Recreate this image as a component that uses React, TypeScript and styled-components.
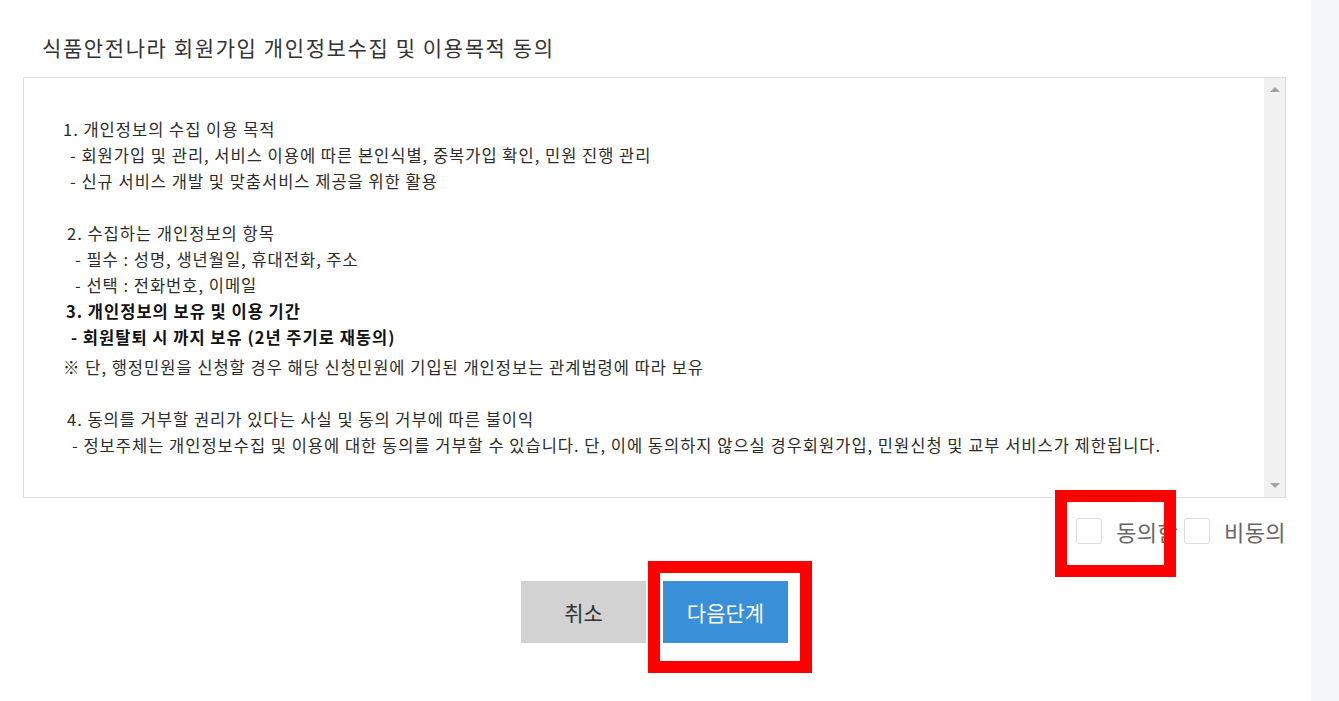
import React from 'react';
import styled, { createGlobalStyle } from 'styled-components';

const GlobalStyle = createGlobalStyle`
  html, body {
    margin: 0;
    padding: 0;
    background: #fff;
  }
  body {
    font-family: "Noto Sans CJK KR", "Noto Sans", sans-serif;
    color: #333;
  }
`;

const Page = styled.div`
  position: relative;
  display: flex;
  height: 701px;
  overflow: hidden;
`;

const Main = styled.div`
  flex: 1;
  padding: 32px 25px 0 23px;
`;

const SideStrip = styled.div`
  width: 28px;
  background: #f5f6f8;
`;

const Title = styled.h2`
  margin: 0 0 15px 19px;
  font-size: 21px;
  line-height: 30px;
  font-weight: 400;
  letter-spacing: 1.6px;
  color: #333;
`;

const TermsBox = styled.div`
  display: flex;
  height: 419px;
  border: 1px solid #dddddd;
`;

const TermsText = styled.div`
  flex: 1;
  padding: 38px 0 0 39px;
  font-size: 16.5px;
  line-height: 26px;
  letter-spacing: 1px;
  color: #2b2b2b;
`;

const Line = styled.div<{ $indent?: number; $bold?: boolean; $gapTop?: number }>`
  padding-left: ${(p) => p.$indent ?? 0}px;
  margin-top: ${(p) => p.$gapTop ?? 0}px;
  font-weight: ${(p) => (p.$bold ? 700 : 400)};
  color: ${(p) => (p.$bold ? '#111' : '#2b2b2b')};
  white-space: nowrap;
`;

const Blank = styled.div`
  height: 26px;
`;

const ScrollTrack = styled.div`
  width: 21px;
  background: #f1f1f1;
  display: flex;
  flex-direction: column;
  justify-content: space-between;
  align-items: center;
  padding: 9px 0 9px;
`;

const Arrow = styled.div<{ $down?: boolean }>`
  width: 0;
  height: 0;
  border-left: 5px solid transparent;
  border-right: 5px solid transparent;
  ${(p) =>
    p.$down ? 'border-top: 5px solid #a3a3a3;' : 'border-bottom: 5px solid #a3a3a3;'}
`;

const AgreeRow = styled.div`
  display: flex;
  justify-content: flex-end;
  align-items: center;
  gap: 6px;
  margin-top: 20px;
  height: 26px;
`;

const AgreeOption = styled.label`
  display: flex;
  align-items: center;
  font-size: 22px;
  letter-spacing: 0.4px;
  color: #666;
`;

const CheckBox = styled.span`
  display: inline-block;
  width: 24px;
  height: 24px;
  border: 1px solid #dddddd;
  border-radius: 3px;
  background: #fff;
  margin-right: 14px;
`;

const ButtonRow = styled.div`
  display: flex;
  justify-content: center;
  gap: 17px;
  margin-top: 37px;
`;

const Button = styled.button<{ $primary?: boolean }>`
  width: 125px;
  height: 62px;
  border: none;
  border-radius: 0;
  font-family: inherit;
  font-size: 21px;
  cursor: pointer;
  background: ${(p) => (p.$primary ? '#398fd8' : '#d2d2d2')};
  color: ${(p) => (p.$primary ? '#fff' : '#333')};
`;

const Highlight = styled.div<{ $x: number; $y: number; $w: number; $h: number }>`
  position: absolute;
  left: ${(p) => p.$x}px;
  top: ${(p) => p.$y}px;
  width: ${(p) => p.$w}px;
  height: ${(p) => p.$h}px;
  box-sizing: border-box;
  border: 12px solid #ff0000;
  pointer-events: none;
`;

const App: React.FC = () => {
  return (
    <>
      <GlobalStyle />
      <Page>
        <Main>
          <Title>식품안전나라 회원가입 개인정보수집 및 이용목적 동의</Title>

          <TermsBox>
            <TermsText>
              <Line>1. 개인정보의 수집 이용 목적</Line>
              <Line $indent={7}>- 회원가입 및 관리, 서비스 이용에 따른 본인식별, 중복가입 확인, 민원 진행 관리</Line>
              <Line $indent={7}>- 신규 서비스 개발 및 맞춤서비스 제공을 위한 활용</Line>
              <Blank />
              <Line $indent={4}>2. 수집하는 개인정보의 항목</Line>
              <Line $indent={12}>- 필수 : 성명, 생년월일, 휴대전화, 주소</Line>
              <Line $indent={12}>- 선택 : 전화번호, 이메일</Line>
              <Line $indent={3} $bold>3. 개인정보의 보유 및 이용 기간</Line>
              <Line $indent={8} $bold>- 회원탈퇴 시 까지 보유 (2년 주기로 재동의)</Line>
              <Line $gapTop={4}>※ 단, 행정민원을 신청할 경우 해당 신청민원에 기입된 개인정보는 관계법령에 따라 보유</Line>
              <Blank />
              <Line $indent={4}>4. 동의를 거부할 권리가 있다는 사실 및 동의 거부에 따른 불이익</Line>
              <Line $indent={9}>- 정보주체는 개인정보수집 및 이용에 대한 동의를 거부할 수 있습니다. 단, 이에 동의하지 않으실 경우회원가입, 민원신청 및 교부 서비스가 제한됩니다.</Line>
            </TermsText>
            <ScrollTrack>
              <Arrow />
              <Arrow $down />
            </ScrollTrack>
          </TermsBox>

          <AgreeRow>
            <AgreeOption>
              <CheckBox />
              동의함
            </AgreeOption>
            <AgreeOption>
              <CheckBox />
              비동의
            </AgreeOption>
          </AgreeRow>

          <ButtonRow>
            <Button>취소</Button>
            <Button $primary>다음단계</Button>
          </ButtonRow>
        </Main>
        <SideStrip />

        <Highlight $x={1055} $y={490} $w={121} $h={87} />
        <Highlight $x={648} $y={561} $w={164} $h={112} />
      </Page>
    </>
  );
};

export default App;
